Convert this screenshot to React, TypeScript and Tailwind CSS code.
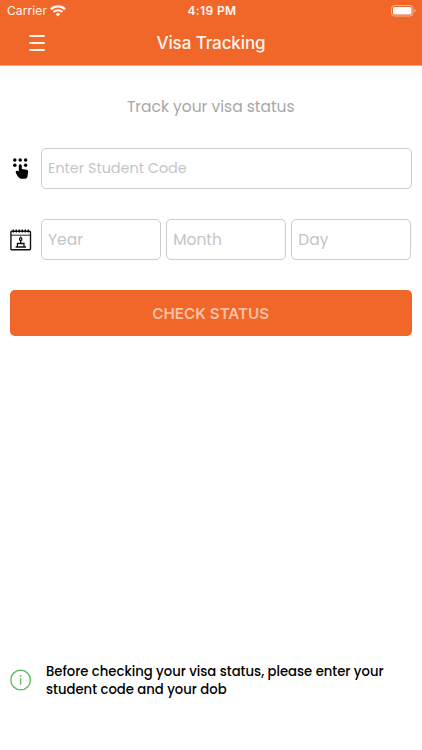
import React from "react";

const WifiIcon = () => (
  <svg className="w-4 h-3" viewBox="0 0 16 12" fill="none" stroke="#fff6f0">
    <path d="M.9 4.4a10 10 0 0 1 14.2 0" strokeWidth="2.3" />
    <path d="M3.5 7.1a6.4 6.4 0 0 1 9 0" strokeWidth="2.1" />
    <path d="M8 11.5 5.6 9.1a3.4 3.4 0 0 1 4.8 0Z" fill="#fff6f0" stroke="none" />
  </svg>
);

const BatteryIcon = () => (
  <svg className="w-[26px] h-3" viewBox="0 0 26 12" fill="none">
    <rect x="0.5" y="0.5" width="21.5" height="10.5" rx="3" stroke="#f9b595" />
    <rect x="2" y="2" width="18.5" height="7.5" rx="1.5" fill="#fff" />
    <path d="M23.5 4v3.6c.8-.3 1.2-1 1.2-1.8s-.4-1.5-1.2-1.8Z" fill="#f9b595" />
  </svg>
);

const CodeIcon = () => (
  <svg className="w-5 h-[22px]" viewBox="0 0 20 22" fill="#000">
    <circle cx="4.8" cy="1.9" r="1.75" />
    <circle cx="10.2" cy="1.9" r="1.75" />
    <circle cx="15.6" cy="1.9" r="1.75" />
    <circle cx="4.8" cy="7.3" r="1.75" />
    <circle cx="15.6" cy="7.3" r="1.75" />
    <path d="M8.8 7.9c0-2.1 3-2.1 3 0v3l4.8.9c1.2.2 1.7 1 1.5 2.1l-.6 4.4c-.1.6-.5 1.2-.9 1.6-.9 1.1-5.6 1.2-6.8.4-2-1.2-2.8-3.5-3.8-5.1-.9-1.6.5-3.1 1.8-2.2l1 .6V7.9Z" />
  </svg>
);

const BirthdayIcon = () => (
  <svg className="w-[22px] h-[22px]" viewBox="0 0 22 22" fill="none" stroke="#111">
    <rect x="0.9" y="2.2" width="19.6" height="18.5" rx="1" strokeWidth="1.4" />
    <path d="M1 6.2h19.6" strokeWidth="0.9" />
    <path d="M3.3 .4v3M6.3 .4v3M9.3 .4v3M12.3 .4v3M15.3 .4v3M18.3 .4v3" strokeWidth="1.4" />
    <path d="M10.7 8.2c1.6 1.6 1.6 3.2 0 3.2s-1.6-1.6 0-3.2Z" strokeWidth="1.2" />
    <path d="M10.7 11.4v2.8M7.4 17.4v-2.9H14v2.9M5.6 18h10.4" strokeWidth="1.3" />
  </svg>
);

const InfoIcon = () => (
  <svg className="w-[22px] h-[22px]" viewBox="0 0 22 22" fill="none" stroke="#58b95b">
    <circle cx="10.6" cy="11" r="9.8" strokeWidth="1.3" />
    <path d="M10.6 9.3v6.4" strokeWidth="1.3" />
    <circle cx="10.6" cy="6.8" r=".9" fill="#58b95b" stroke="none" />
  </svg>
);

const inputClass =
  "min-w-0 w-full h-[41px] border border-[#cbcbcb] rounded-[5px] bg-white pl-[6px] pb-px text-[#c4c5c7] placeholder-[#c4c5c7] outline-none";

export default function App() {
  return (
    <div className="h-screen flex flex-col bg-white font-['Poppins','Inter',sans-serif]">
      {/*header*/}
      <header className="h-[66px] shrink-0 bg-[#f16629] border-b border-[#f7a27c] text-[#fff6f0] font-['Inter',sans-serif]">
        <div className="h-[22px] grid grid-cols-3 items-center pl-[7px] pr-[5px]">
          <div className="flex items-center gap-[3px]">
            <span className="text-[12px] tracking-[0.1px] leading-none">Carrier</span>
            <WifiIcon />
          </div>
          <span className="text-center text-[12px] font-semibold tracking-[0.4px] leading-none">4:19 PM</span>
          <div className="flex justify-end">
            <BatteryIcon />
          </div>
        </div>
        <div className="h-[43px] grid grid-cols-[1fr_auto_1fr] items-center">
          <button type="button" aria-label="Menu" className="ml-[29px] -mt-px w-4 flex flex-col gap-[5px]">
            <span className="h-[2px] rounded-full bg-[#fff6f0]"></span>
            <span className="h-[2px] rounded-full bg-[#fff6f0]"></span>
            <span className="h-[2px] rounded-full bg-[#fff6f0]"></span>
          </button>
          <h1 className="text-[17px] font-medium tracking-[-0.1px]">Visa Tracking</h1>
        </div>
      </header>

      {/*form*/}
      <main className="flex-1 pl-[10px] pr-[10.5px] pt-[29px]">
        <p className="text-center text-[15.5px] leading-6 text-[#a7a7a7]">Track your visa status</p>
        <div className="mt-[29px] flex items-center">
          <div className="w-[31px] shrink-0">
            <CodeIcon />
          </div>
          <input type="text" className={`${inputClass} text-[14.4px]`} placeholder="Enter Student Code" />
        </div>
        <div className="mt-[30px] flex items-center">
          <div className="w-[31px] shrink-0">
            <BirthdayIcon />
          </div>
          <div className="flex-1 grid grid-cols-3 gap-[5px]">
            <input type="text" className={`${inputClass} text-[15.5px]`} placeholder="Year" />
            <input type="text" className={`${inputClass} text-[15.5px]`} placeholder="Month" />
            <input type="text" className={`${inputClass} text-[15.5px]`} placeholder="Day" />
          </div>
        </div>
        <button
          type="button"
          className="mt-[30px] w-full h-[46px] pt-[2px] rounded-[5px] bg-[#f16629] text-[#fac1a5] font-['Inter',sans-serif] text-[15.2px] font-semibold"
        >
          CHECK STATUS
        </button>
      </main>

      {/*hint*/}
      <footer className="flex items-center pl-[10px] pb-[51px]">
        <div className="pb-[2px]">
          <InfoIcon />
        </div>
        <p className="ml-[14px] text-[13.2px] leading-[18px] font-medium text-black">
          Before checking your visa status, please enter your
          <br />
          student code and your dob
        </p>
      </footer>
    </div>
  );
}
